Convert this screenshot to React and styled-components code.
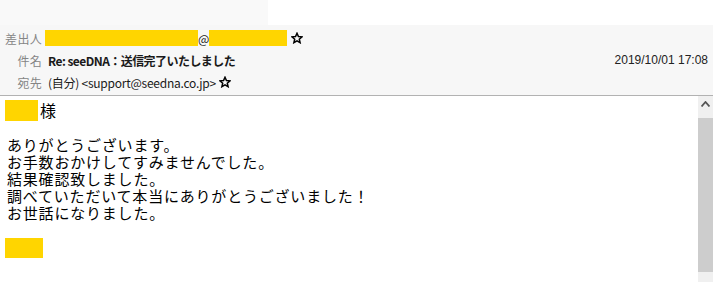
import React from 'react'
import styled, { createGlobalStyle } from 'styled-components'

const GlobalStyle = createGlobalStyle`
  html, body { margin: 0; padding: 0; background: #fff; }
  body { font-family: "Noto Sans CJK JP", "Noto Sans", sans-serif; }
`

const Page = styled.div`
  width: 713px;
  height: 282px;
  display: flex;
  flex-direction: column;
  overflow: hidden;
`

const TopStrip = styled.div`
  height: 25px;
  display: flex;
`

const TabArea = styled.div`
  width: 268px;
  background: #f9f9f9;
`

const Header = styled.div`
  background: #f7f7f7;
  padding: 2px 0;
  height: 66px;
  border-bottom: 1px solid #b2b2b2;
  display: flex;
  flex-direction: column;
`

const Row = styled.div`
  height: 22px;
  display: flex;
  align-items: center;
  font-size: 12px;
  color: #1a1a1a;
`

const Label = styled.span`
  width: 37px;
  margin: 0 3px 0 5px;
  text-align: right;
  color: #858585;
  letter-spacing: 0.3px;
  flex-shrink: 0;
`

const Mask = styled.span`
  display: inline-block;
  flex-shrink: 0;
  background: #ffd500;
  width: ${p => p.w}px;
  height: ${p => p.h}px;
`

const Subject = styled.span`
  font-weight: 700;
  margin-left: 3px;
  letter-spacing: -0.55px;
`

const Plain = styled.span`
  margin-left: ${p => p.ml || 0}px;
  letter-spacing: ${p => p.ls || 0}px;
`

const DateText = styled.span`
  margin-left: auto;
  margin-right: 5px;
  font-family: "Liberation Sans", Arial, sans-serif;
  color: #222;
`

const StarBox = styled.span`
  display: inline-flex;
  margin-left: ${p => p.ml || 3}px;
`

const Star = ({ ml }) => (
  <StarBox ml={ml}>
    <svg width="12" height="12" viewBox="0 0 24 24" fill="none" stroke="#000" strokeWidth="3" strokeLinejoin="miter">
      <polygon points="12,2.5 14.9,9 22,9.6 16.6,14.3 18.2,21.3 12,17.6 5.8,21.3 7.4,14.3 2,9.6 9.1,9" />
    </svg>
  </StarBox>
)

const Main = styled.div`
  flex: 1;
  display: flex;
  min-height: 0;
`

const Content = styled.div`
  flex: 1;
  padding: 6px 0 0 7px;
  font-size: 15px;
  letter-spacing: 0.8px;
  line-height: 17px;
  color: #000;
`

const Line = styled.div`
  height: 17px;
  display: flex;
  align-items: center;
  white-space: pre;
`

const Greeting = styled.span`
  margin-left: 2px;
  font-size: 16px;
`

const Scrollbar = styled.div`
  width: 15px;
  display: flex;
  flex-direction: column;
  background: #f0f0f0;
`

const ArrowButton = styled.div`
  height: 22px;
  display: flex;
  align-items: flex-start;
  justify-content: center;
  padding-top: 5px;
  box-sizing: border-box;
`

const Thumb = styled.div`
  height: 154px;
  background: #cdcdcd;
`

const lines = [
  'ありがとうございます。',
  'お手数おかけしてすみませんでした。',
  '結果確認致しました。',
  '調べていただいて本当にありがとうございました！',
  'お世話になりました。',
]

export default function App() {
  return (
    <Page>
      <GlobalStyle />
      <TopStrip>
        <TabArea />
      </TopStrip>
      <Header>
        <Row>
          <Label>差出人</Label>
          <Mask w={153} h={16} />
          <Plain>@</Plain>
          <Mask w={78} h={16} />
          <Star ml={4} />
        </Row>
        <Row>
          <Label>件名</Label>
          <Subject>Re: seeDNA：送信完了いたしました</Subject>
          <DateText>2019/10/01 17:08</DateText>
        </Row>
        <Row>
          <Label>宛先</Label>
          <Plain ml={3} ls={-0.25}>(自分) &lt;support@seedna.co.jp&gt;</Plain>
          <Star ml={3} />
        </Row>
      </Header>
      <Main>
        <Content>
          <Line>
            <Mask w={33} h={21} style={{ marginLeft: -2 }} />
            <Greeting>様</Greeting>
          </Line>
          <Line />
          {lines.map((l, i) => (
            <Line key={i}>{l}</Line>
          ))}
          <Line />
          <Line>
            <Mask w={38} h={20} style={{ marginLeft: -2, marginTop: 3 }} />
          </Line>
        </Content>
        <Scrollbar>
          <ArrowButton>
            <svg width="9" height="6" viewBox="0 0 9 6">
              <path d="M0.5 5.5 L4.5 1 L8.5 5.5" fill="none" stroke="#555" strokeWidth="1.8" />
            </svg>
          </ArrowButton>
          <Thumb />
        </Scrollbar>
      </Main>
    </Page>
  )
}
